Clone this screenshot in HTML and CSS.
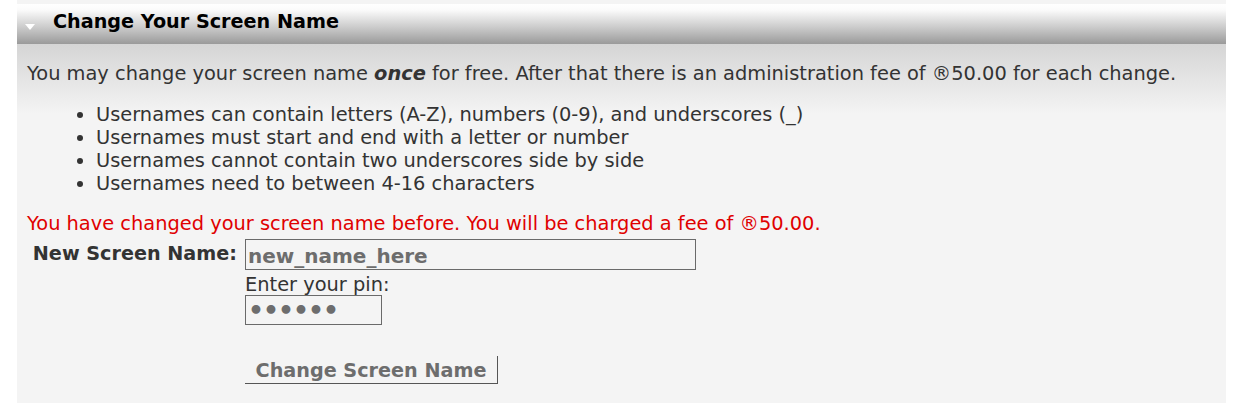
FILE: index.html
```html
<!DOCTYPE html>
<html>
<head>
<meta charset="utf-8">
<link rel="stylesheet" href="styles.css">
</head>
<body>
<div class="panel">
  <div class="panel-header">
    <span class="arrow"></span>
    <h2 class="title">Change Your Screen Name</h2>
  </div>
  <div class="panel-body">
    <p class="intro">You may change your screen name <b><i>once</i></b> for free. After that there is an administration fee of ®50.00 for each change.</p>
    <ul class="rules">
      <li>Usernames can contain letters (A-Z), numbers (0-9), and underscores (_)</li>
      <li>Usernames must start and end with a letter or number</li>
      <li>Usernames cannot contain two underscores side by side</li>
      <li>Usernames need to between 4-16 characters</li>
    </ul>
    <p class="warning">You have changed your screen name before. You will be charged a fee of ®50.00.</p>
    <div class="form">
      <label class="form-label">New Screen Name:</label>
      <div class="form-fields">
        <input class="name-input" type="text" value="new_name_here">
        <span class="pin-label">Enter your pin:</span>
        <input class="pin-input" type="password" value="123456">
        <button class="submit" type="button">Change Screen Name</button>
      </div>
    </div>
  </div>
</div>
</body>
</html>
```

FILE: styles.css
```css
html, body {
  margin: 0;
  padding: 0;
  background: #ffffff;
}
body {
  font-family: "DejaVu Sans", Verdana, sans-serif;
  font-size: 19.4px;
  color: #333333;
}
.panel {
  margin-left: 17px;
  width: 1209px;
  height: 403px;
  background: #f4f4f4;
  padding-top: 4px;
  box-sizing: border-box;
}
.panel-header {
  height: 40px;
  background: linear-gradient(#ffffff 0%, #fbfbfb 15%, #c9c9c9 60%, #9a9a9a 100%);
  display: flex;
  align-items: flex-start;
}
.arrow {
  width: 0;
  height: 0;
  margin: 20px 0 0 8px;
  border-left: 5px solid transparent;
  border-right: 5px solid transparent;
  border-top: 6px solid #ffffff;
}
.title {
  margin: 6px 0 0 18px;
  font-size: 19.2px;
  font-weight: bold;
  color: #000000;
  line-height: 24px;
}
.panel-body {
  background: linear-gradient(#d5d5d5 0px, #f4f4f4 70px);
  padding: 18px 10px 0 10px;
}
.intro {
  margin: 0;
  line-height: 24px;
}
.rules {
  margin: 17px 0 0 0;
  padding-left: 69px;
  line-height: 23px;
}
.warning {
  margin: 17px 0 0 0;
  color: #e00000;
  line-height: 24px;
}
.form {
  display: flex;
  margin-top: 3px;
}
.form-label {
  width: 210px;
  text-align: right;
  font-weight: bold;
  font-size: 19.2px;
  padding-top: 3px;
  line-height: 24px;
  margin-right: 8px;
}
.form-fields {
  display: flex;
  flex-direction: column;
  align-items: flex-start;
}
.name-input {
  width: 451px;
  height: 31px;
  box-sizing: border-box;
  border: 1px solid #6a6a6a;
  background: #f4f4f4;
  font-family: "DejaVu Sans", Verdana, sans-serif;
  font-size: 20px;
  font-weight: bold;
  color: #6d6d6d;
  padding: 3px 2px 0 2px;
  margin: 0;
}
.pin-label {
  line-height: 24px;
  margin-top: 3px;
}
.pin-input {
  width: 137px;
  height: 30px;
  box-sizing: border-box;
  border: 1px solid #6a6a6a;
  background: #f4f4f4;
  font-family: "DejaVu Sans", Verdana, sans-serif;
  font-size: 25px;
  font-weight: bold;
  color: #6d6d6d;
  padding: 0 2px;
  letter-spacing: -1px;
  margin: -2px 0 0 0;
}
.submit {
  margin-top: 31px;
  width: 253px;
  height: 28px;
  box-sizing: border-box;
  border: none;
  border-right: 1px solid #555555;
  border-bottom: 1px solid #555555;
  background: #f4f4f4;
  font-family: "DejaVu Sans", Verdana, sans-serif;
  font-size: 19.2px;
  font-weight: bold;
  color: #6d6d6d;
  padding: 2px 0 0 0;
}
```
